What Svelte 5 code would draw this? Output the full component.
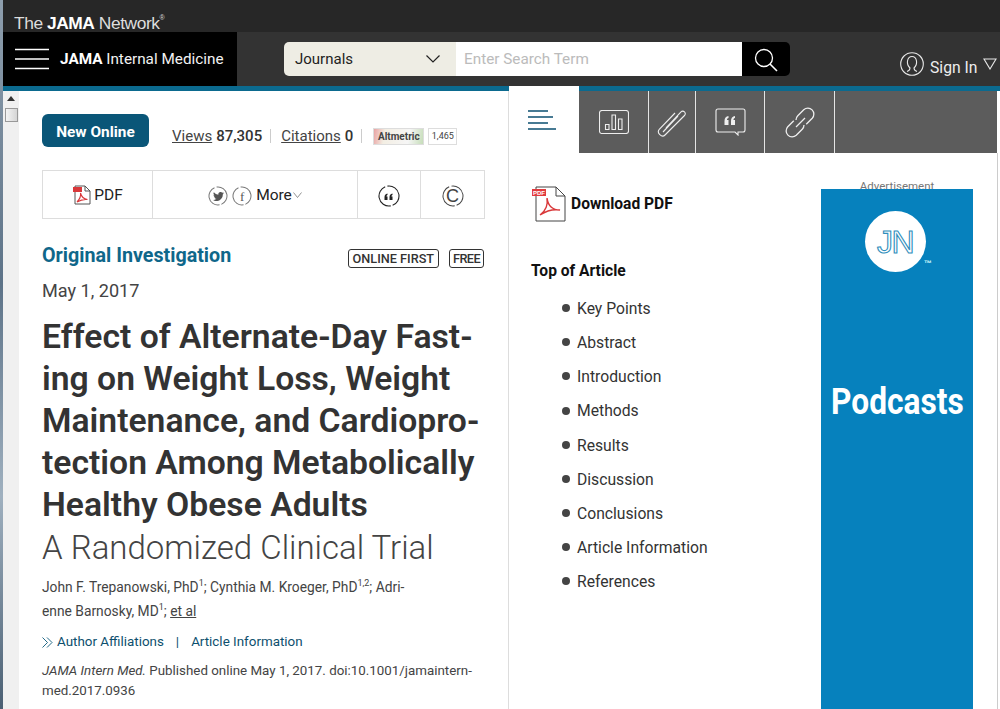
<script>
  const toc = ['Key Points','Abstract','Introduction','Methods','Results','Discussion','Conclusions','Article Information','References'];
</script>

<div class="page">
  <div class="edge"></div>
  <div class="main">
    <div class="topbar"><span class="net">The <b>JAMA</b> Network<sup>®</sup></span></div>
    <header class="nav">
      <div class="brand">
        <svg width="34" height="22" viewBox="0 0 34 22"><path d="M0 1.500H34M0 11H34M0 20.500H34" stroke="#fff" stroke-width="1.600"/></svg>
        <span><b>JAMA</b> Internal Medicine</span>
      </div>
      <div class="search">
        <div class="sel"><span>Journals</span>
          <svg width="14" height="8" viewBox="0 0 14 8"><path d="M.5.5 7 7 13.500.5" fill="none" stroke="#222" stroke-width="1.200"/></svg>
        </div>
        <div class="input">Enter Search Term</div>
        <div class="go">
          <svg width="24" height="24" viewBox="0 0 24 24"><circle cx="10" cy="10" r="8.500" fill="none" stroke="#fff" stroke-width="1.300"/><path d="M16 16l7 7" stroke="#fff" stroke-width="1.600"/></svg>
        </div>
      </div>
      <div class="sign">
        <svg width="24" height="24" viewBox="0 0 24 24" fill="none" stroke="#e8e8e8" stroke-width="1.100"><circle cx="12" cy="12" r="11.300"/><path d="M7 19.500c3-1 3-2 3-3.500-2-2-3-4-2.500-7C8 6 10 4.500 12 4.500S16 6 16.500 9c.5 3-.5 5-2.500 7 0 1.500 0 2.500 3 3.500"/></svg>
        <span>Sign In</span>
        <svg class="tri" width="14" height="12" viewBox="0 0 14 12"><path d="M1 1h12L7 11z" fill="none" stroke="#e8e8e8" stroke-width="1.100"/></svg>
      </div>
    </header>

    <div class="content">
      <aside class="scroll">
        <svg width="8" height="5" viewBox="0 0 8 5"><path d="M0 5 4 0l4 5z" fill="#333"/></svg>
        <div class="thumb"></div>
      </aside>

      <article class="article">
        <div class="meta">
          <span class="badge">New Online</span>
          <span class="stats"><u>Views</u> <b>87,305</b><i class="sep"></i><u>Citations</u> <b>0</b><i class="sep"></i></span>
          <span class="alt">Altmetric</span><span class="altn">1,465</span>
        </div>

        <div class="tools">
          <div class="t1">
            <svg width="20" height="20" viewBox="0 0 20 20"><path d="M3 1h10l5 5v13H3z" fill="#fff" stroke="#555"/><path d="M13 1v5h5" fill="none" stroke="#555"/><rect x="1" y="2" width="9" height="5" fill="#d9383a"/><path d="M5 17c3-3 4-6 3.500-9 1 4 3 6 7 6.500-3-.5-7 .5-10.500 2.500z" fill="none" stroke="#d9383a" stroke-width="1.100"/></svg>
            <span>PDF</span>
          </div>
          <div class="t2">
            <span class="circ"><svg class="ring" width="20" height="20" viewBox="0 0 20 20"><circle cx="10" cy="10" r="9" fill="none" stroke="#777" stroke-dasharray="26 2.270" transform="rotate(80 10 10)"/></svg><svg width="11" height="9" viewBox="0 0 24 20"><path d="M24 2.400a10 10 0 0 1-2.800.8A5 5 0 0 0 23.300.5a10 10 0 0 1-3.100 1.200 4.900 4.900 0 0 0-8.400 4.500A14 14 0 0 1 1.700.5a4.900 4.900 0 0 0 1.500 6.600A5 5 0 0 1 1 6.500c0 2.400 1.700 4.400 3.900 4.800a5 5 0 0 1-2.200.1 4.900 4.900 0 0 0 4.600 3.400A10 10 0 0 1 0 17.800 14 14 0 0 0 21.500 5.400 10 10 0 0 0 24 2.400z" fill="#555"/></svg></span>
            <span class="circ f"><svg class="ring" width="20" height="20" viewBox="0 0 20 20"><circle cx="10" cy="10" r="9" fill="none" stroke="#777" stroke-dasharray="26 2.270" transform="rotate(80 10 10)"/></svg>f</span>
            <span class="more">More</span>
            <svg width="9" height="6" viewBox="0 0 9 6"><path d="M.5.500 4.500 5.500 8.500.500" fill="none" stroke="#777" stroke-width=".8"/></svg>
          </div>
          <div class="t3"><span class="circ q"><svg class="ring" width="22" height="22" viewBox="0 0 22 22"><circle cx="11" cy="11" r="10" fill="none" stroke="#222" stroke-width="1.100" stroke-dasharray="29 2.420" transform="rotate(80 11 11)"/><path d="M6.500 15v-3c0-2 1-3 3-3.500v1.500c-1 .3-1 1-1 1.500h1V15zM11.500 15v-3c0-2 1-3 3-3.500v1.500c-1 .3-1 1-1 1.500h1V15z" fill="#222"/></svg></span></div>
          <div class="t4"><span class="circ c"><svg class="ring" width="22" height="22" viewBox="0 0 22 22"><circle cx="11" cy="11" r="10" fill="none" stroke="#444" stroke-dasharray="29 2.420" transform="rotate(80 11 11)"/></svg>C</span></div>
        </div>

        <div class="kind">
          <span class="orig">Original Investigation</span>
          <span class="tags"><span class="tag">ONLINE FIRST</span><span class="tag free">FREE</span></span>
        </div>
        <p class="date">May 1, 2017</p>
        <h1>Effect of Alternate-Day Fast-<br>ing on Weight Loss, Weight<br>Maintenance, and Cardiopro-<br>tection Among Metabolically<br>Healthy Obese Adults</h1>
        <p class="sub">A Randomized Clinical Trial</p>
        <p class="authors">John F. Trepanowski, PhD<sup>1</sup>; Cynthia M. Kroeger, PhD<sup>1,2</sup>; Adri-<br>enne Barnosky, MD<sup>1</sup>; <u>et al</u></p>
        <p class="links">
          <svg width="11" height="11" viewBox="0 0 11 11"><path d="M.5.500 5.500 5.500.5 10.500M5 .5l5 5-5 5" fill="none" stroke="#0b5a7c" stroke-width=".9"/></svg>
          <span>Author Affiliations</span><span class="bar">|</span><span>Article Information</span>
        </p>
        <p class="cite"><em>JAMA Intern Med.</em> Published online May 1, 2017. doi:10.1001/jamaintern-<br>med.2017.0936</p>
      </article>

      <section class="side">
        <div class="tabs">
          <div class="tab active">
            <svg width="28" height="20" viewBox="0 0 28 20"><path d="M0 1h20M0 7h25M0 13h20M0 19h28" stroke="#0b4f70" stroke-width="1.400"/></svg>
          </div>
          <div class="tab w69">
            <svg width="30" height="24" viewBox="0 0 30 24" fill="none" stroke="#eee" stroke-width="1.100"><rect x=".5" y=".5" width="29" height="23" rx="2.500"/><path d="M6.500 19.500v-5h3.500v5zM13 19.500V5h3.500v14.500zM19.500 19.500V9H23v10.500z"/></svg>
          </div>
          <div class="tab w47">
            <svg width="30" height="30" viewBox="0 0 30 30" fill="none" stroke="#eee" stroke-width="1.100"><path d="M9 21 24 5c2-2.500 6 1 3.500 3.500L8 28c-3 3-9-2-5.500-6L18 6M6 25 21 9"/></svg>
          </div>
          <div class="tab w69">
            <svg width="31" height="28" viewBox="0 0 31 28"><path d="M3 1h25c1 0 2 1 2 2v19c0 1-1 2-2 2h-5v3l-3-3H3c-1 0-2-1-2-2V3c0-1 1-2 2-2z" fill="none" stroke="#eee" stroke-width="1.100"/><path d="M9.500 17v-4c0-3 1.500-4.500 4-5v2c-1.200.4-1.500 1-1.500 2h1.500v5zM16 17v-4c0-3 1.500-4.500 4-5v2c-1.200.4-1.500 1-1.500 2H20v5z" fill="#eee"/></svg>
          </div>
          <div class="tab w70">
            <svg width="30" height="31" viewBox="0 0 30 31" fill="none" stroke="#eee" stroke-width="1.300"><path d="M21.240 17.240 27.240 11.240A6 6 0 0 0 18.760 2.760L12.760 8.760A6 6 0 0 0 11 13"/><path d="M8.760 13.760 2.760 19.760A6 6 0 0 0 11.240 28.240L17.240 22.240A6 6 0 0 0 19 18"/><path d="M11 20 20 11"/></svg>
          </div>
          <div class="tab rest"></div>
        </div>

        <div class="sidebody">
          <div class="nav2">
            <div class="dl">
              <svg width="36" height="36" viewBox="0 0 36 36"><path d="M5 1h20l9 9v25H5z" fill="#fff" stroke="#444"/><path d="M25 1v9h9" fill="none" stroke="#444"/><rect x="1" y="3" width="14" height="7" fill="#e23b3e"/><text x="8" y="9" text-anchor="middle" class="pdft">PDF</text><path d="M9 29c6-4 8-11 7-17 1 7 5 12 13 12-6-1-14 1-20 5z" fill="none" stroke="#d9383a" stroke-width="1.500"/></svg>
              <span>Download PDF</span>
            </div>
            <h3>Top of Article</h3>
            <ul>
              {#each toc as t}<li>{t}</li>{/each}
            </ul>
          </div>
          <div class="ad">
            <div class="adlabel">Advertisement</div>
            <div class="adbox">
              <div class="logo"><span>JN</span></div>
              <div class="tm">™</div>
              <div class="pod">Podcasts</div>
            </div>
          </div>
        </div>
      </section>
    </div>
  </div>
</div>

<style>
  :global(body) { margin: 0; background: #fff; }
  .page { display: flex; width: 1000px; height: 709px; overflow: hidden; font-family: Roboto, sans-serif; color: #333; }
  .edge { width: 3px; flex: none; background: linear-gradient(#8f9fae, #5d7388 40%, #9fb0bf 70%, #4a5f73); }
  .main { flex: 1; min-width: 0; display: flex; flex-direction: column; }
  .topbar { height: 32px; background: #272727; display: flex; align-items: flex-end; padding-left: 11px; box-sizing: border-box; }
  .net { font: 17.400px/17px "Liberation Sans", sans-serif; color: #ddd; letter-spacing: -.45px; }
  .net b { color: #fff; }
  .net sup { font-size: 7px; vertical-align: 9px; line-height: 0; }
  .nav { height: 54px; background: #333; display: flex; }
  .brand { width: 234px; background: #000; display: flex; align-items: center; gap: 11px; padding: 0 0 0 12px; box-sizing: border-box; color: #f2f2f2; font-size: 15.300px; flex: none; white-space: nowrap; }
  .brand b { color: #fff; }
  .search { display: flex; height: 34px; margin: 10px 0 0 47px; width: 506px; flex: none; border-radius: 5px; overflow: hidden; }
  .sel { width: 172px; background: #eeede4; display: flex; align-items: center; justify-content: space-between; padding: 0 16px 0 11px; box-sizing: border-box; font-size: 15px; color: #222; }
  .input { width: 286px; background: #fff; color: #bbb; font-size: 15.300px; line-height: 34px; padding-left: 8px; box-sizing: border-box; }
  .go { flex: 1; background: #000; display: flex; align-items: center; justify-content: center; }
  .go svg { margin-top: 1px; }
  .sign { margin-left: 110px; display: flex; align-items: center; gap: 6px; color: #eee; font-size: 15.700px; padding-top: 16px; white-space: nowrap; }
  .sign > svg:first-child { margin-top: -7px; }
  .tri { margin-top: -6px; }
  .content { flex: 1; display: flex; min-height: 0; border-top: 5px solid #0b6a8f; position: relative; }
  .scroll { width: 16px; flex: none; background: #f0f0f0; display: flex; flex-direction: column; align-items: center; padding-top: 5px; box-sizing: border-box; }
  .thumb { width: 13px; height: 14px; margin-top: 7px; border: 1px solid #999; background: linear-gradient(90deg, #f4f4f4, #d5d5d5); box-sizing: border-box; }
  .article { width: 490px; flex: none; box-sizing: border-box; padding: 23px 0 0 23px; border-right: 1px solid #ddd; }
  .meta { display: flex; align-items: center; height: 33px; font-size: 15px; }
  .badge { background: #0a5678; color: #fff; font-weight: 700; font-size: 15.400px; height: 33px; line-height: 36px; width: 107px; text-align: center; border-radius: 6px; flex: none; }
  .stats { margin-left: 23px; margin-top: 11px; color: #444; white-space: nowrap; display: flex; align-items: center; gap: 4px; }
  .stats b { color: #333; font-weight: 500; }
  .sep { display: inline-block; width: 1px; height: 14px; background: #ccc; margin: 0 6px 0 4px; }
  .alt { margin-left: 5px; margin-top: 11px; font: 700 10px/15px Roboto, sans-serif; color: #444; border: 1px solid #ddd; width: 51px; height: 17px; box-sizing: border-box; text-align: center; background: linear-gradient(100deg, #e9a3a3, #f3eee3 22%, #f6f6f6 70%, #c6ddb9); flex: none; }
  .altn { margin-left: 4px; margin-top: 11px; font-size: 9px; line-height: 15px; width: 29px; height: 17px; box-sizing: border-box; border: 1px solid #ddd; text-align: center; color: #444; flex: none; }
  .tools { display: flex; height: 49px; width: 443px; margin-top: 23px; border: 1px solid #ddd; box-sizing: border-box; }
  .tools > div { display: flex; align-items: center; justify-content: center; border-right: 1px solid #ddd; box-sizing: border-box; font-size: 15.500px; color: #222; }
  .t1 { width: 110px; gap: 2px; }
  .t2 { width: 205px; gap: 4px; }
  .t3 { width: 63px; }
  .t4 { flex: 1; border-right: 0 !important; }
  .circ { position: relative; width: 20px; height: 20px; margin-top: 3px; display: inline-flex; align-items: center; justify-content: center; font: 13px/1 "Liberation Serif", serif; color: #555; }
  .ring { position: absolute; left: 0; top: 0; }
  .more { margin-right: -3px; margin-left: 0; }
  .q, .c { width: 22px; height: 22px; }
  .c { font: 18px/1 "Liberation Sans", sans-serif; color: #444; }
  .kind { display: flex; justify-content: space-between; align-items: center; width: 442px; margin-top: 22px; }
  .orig { color: #0f678a; font-weight: 700; font-size: 19.700px; line-height: 30px; }
  .tags { display: flex; gap: 10px; margin-top: 4px; }
  .tag { border: 1px solid #333; border-radius: 3px; font: 500 12.700px/17px Roboto, sans-serif; padding: 0 4px; color: #333; }
  .free { letter-spacing: -.6px; padding: 0 3px; }
  .date { margin: 7px 0 0; font-size: 18.100px; line-height: 26px; color: #444; }
  h1 { margin: 12px 0 0; font-size: 33.700px; line-height: 42px; font-weight: 600; color: #333; white-space: nowrap; }
  .sub { margin: 1px 0 0; font-size: 33px; line-height: 42px; color: #444; white-space: nowrap; font-weight: 300; }
  .authors { margin: 6px 0 0; font-size: 13.800px; line-height: 24px; color: #444; white-space: nowrap; }
  sup { font-size: 9px; line-height: 0; }
  .links { margin: 8px 0 0; font-size: 13.400px; line-height: 22px; color: #0d4f6e; display: flex; align-items: center; gap: 4px; white-space: nowrap; }
  .bar { margin: 0 8px; }
  .cite { margin: 8px 0 0; font-size: 13.350px; line-height: 20px; color: #444; white-space: nowrap; }
  .side { flex: 1; min-width: 0; display: flex; flex-direction: column; margin-top: -5px; }
  .tabs { display: flex; height: 67px; flex: none; padding-right: 3px; }
  .tab { display: flex; align-items: center; justify-content: center; background: #5c5c5c; border-left: 1px solid #e4e4e4; box-sizing: border-box; margin-top: 5px; height: 62px; }
  .tab.active { width: 70px; background: #fff; border: 0; margin-top: 0; height: 67px; justify-content: flex-start; padding-left: 19px; }
  .active + .tab { border-left: 0; }
  .tab.w69 { width: 69px; }
  .tab.w70 { width: 70px; }
  .tab.w47 { width: 47px; }
  .rest { flex: 1; }
  .pdft { font: 700 6px/1 "Liberation Sans", sans-serif; fill: #fff; }
  .sidebody { display: flex; flex: 1; min-height: 0; margin-right: 2px; border-right: 1px solid #ccc; }
  .nav2 { width: 312px; flex: none; padding: 33px 0 0 22px; box-sizing: border-box; }
  .dl { display: flex; align-items: center; gap: 4px; font-size: 15.600px; font-weight: 700; color: #111; }
  h3 { margin: 37px 0 0; font-size: 15.600px; line-height: 24px; font-weight: 700; color: #111; }
  ul { margin: 9px 0 0; padding: 0 0 0 31px; font-size: 15.700px; line-height: 34.150px; color: #333; list-style: none; }
  li { display: flex; align-items: center; gap: 7px; }
  li::before { content: ""; width: 8px; height: 8px; border-radius: 50%; background: #444; flex: none; margin-top: -2px; }
  .ad { width: 152px; margin-top: 26px; position: relative; }
  .adlabel { font-size: 11.500px; line-height: 12px; text-align: center; color: #777; margin-top: 1px; }
  .adbox { background: #0681bd; height: 530px; margin-top: -3px; position: relative; display: flex; flex-direction: column; align-items: center; }
  .logo { width: 61px; height: 61px; border-radius: 50%; background: #fff; margin: 22px 4px 0 0; display: flex; align-items: center; justify-content: center; }
  .logo span { font: 400 32px/1 "Liberation Sans", sans-serif; color: #fff; -webkit-text-stroke: 1.100px #2f8ebc; letter-spacing: -1.500px; }
  .tm { position: absolute; left: 103px; top: 71px; font: 700 8px/1 "Liberation Sans", sans-serif; color: #dff; }
  .pod { margin-top: 105px; font: 700 36px/50px Roboto, sans-serif; color: #fff; transform: scaleX(.88); white-space: nowrap; }
</style>
